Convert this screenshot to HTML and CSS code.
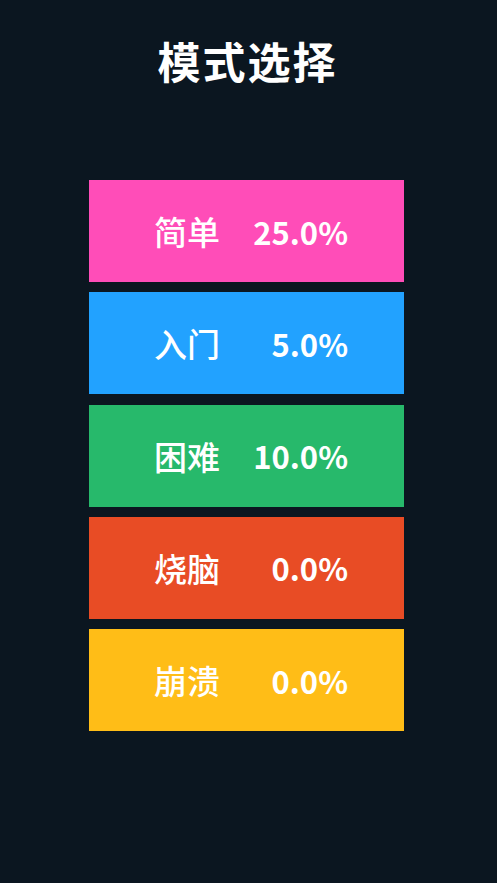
FILE: index.html
```html
<!DOCTYPE html>
<html lang="zh">
<head>
<meta charset="utf-8">
<link rel="stylesheet" href="styles.css">
</head>
<body>
<main class="screen">
  <h1 class="title">模式选择</h1>
  <ul class="modes">
    <li class="mode mode-pink"><span class="name">简单</span><span class="pct">25.0%</span></li>
    <li class="mode mode-blue"><span class="name">入门</span><span class="pct">5.0%</span></li>
    <li class="mode mode-green"><span class="name">困难</span><span class="pct">10.0%</span></li>
    <li class="mode mode-red"><span class="name">烧脑</span><span class="pct">0.0%</span></li>
    <li class="mode mode-yellow"><span class="name">崩溃</span><span class="pct">0.0%</span></li>
  </ul>
</main>
</body>
</html>
```
FILE: styles.css
```css
html, body {
  margin: 0;
  padding: 0;
  background: #0b1620;
}
.screen {
  width: 493px;
  height: 883px;
  display: flex;
  flex-direction: column;
  align-items: center;
  font-family: "Noto Sans CJK SC", "Noto Sans", sans-serif;
  color: #ffffff;
}
.title {
  margin: 31px 0 0 0;
  height: 58px;
  line-height: 58px;
  font-size: 43px;
  font-weight: 700;
  letter-spacing: 2px;
  padding-left: 2px;
}
.modes {
  list-style: none;
  margin: 91px 0 0 0;
  padding: 0;
  display: flex;
  flex-direction: column;
  gap: 10.25px;
  width: 315px;
}
.mode {
  height: 102px;
  display: flex;
  align-items: center;
  justify-content: space-between;
  padding: 0 56px 0 65px;
  font-size: 31px;
  font-weight: 700;
}
.name {
  font-size: 33px;
  font-weight: 500;
}
.mode-pink { background: #ff4db8; }
.mode-blue { background: #22a2ff; }
.mode-green { background: #27b96b; }
.mode-red { background: #e84c25; }
.mode-yellow { background: #ffbd17; }
```
